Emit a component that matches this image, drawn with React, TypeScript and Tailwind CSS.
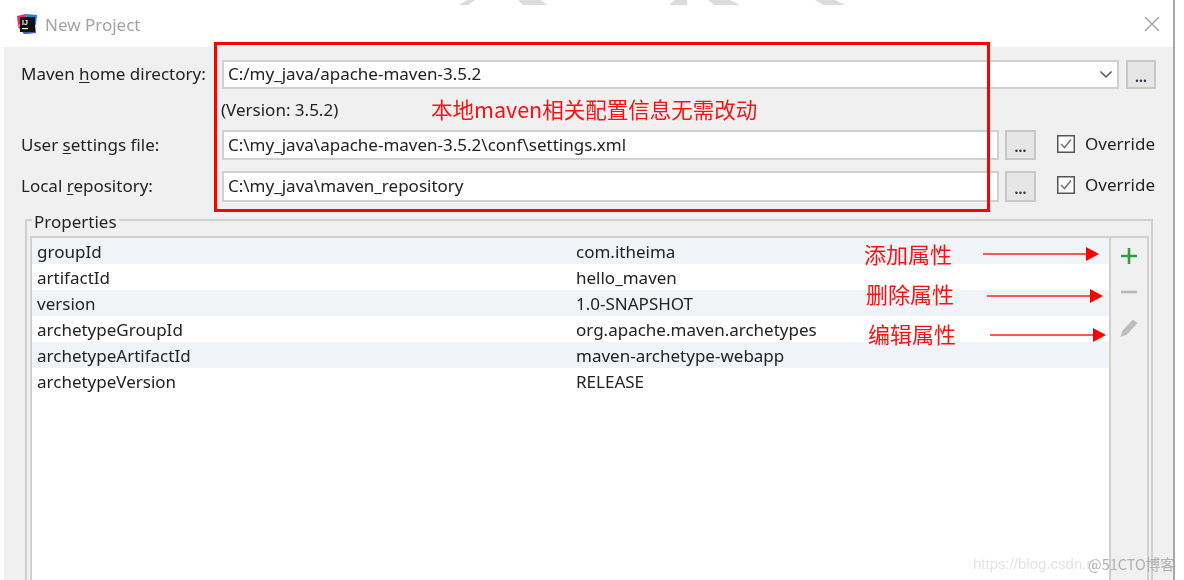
const FONT = "font-['Noto_Sans','Noto_Sans_CJK_SC',sans-serif]";
const CJK = "font-['Noto_Sans_CJK_SC',sans-serif]";

const properties = [
  ['groupId', 'com.itheima'],
  ['artifactId', 'hello_maven'],
  ['version', '1.0-SNAPSHOT'],
  ['archetypeGroupId', 'org.apache.maven.archetypes'],
  ['archetypeArtifactId', 'maven-archetype-webapp'],
  ['archetypeVersion', 'RELEASE'],
];

function Label({ before, mnemonic, after }: { before: string; mnemonic: string; after: string }) {
  return (
    <span className="w-[201px] shrink-0 pb-[1px] text-[17px] text-[#222]">
      {before}
      <span className="underline underline-offset-2">{mnemonic}</span>
      {after}
    </span>
  );
}

function Field({ value, className }: { value: string; className: string }) {
  return (
    <div className={`flex h-full items-center border-2 border-[#d0d0d0] bg-white pl-[4px] pb-[1px] text-[17px] text-[#222] ${className}`}>
      {value}
    </div>
  );
}

function Browse({ className }: { className: string }) {
  return (
    <div className={`flex h-full items-center justify-center border-2 border-[#c8c8c8] bg-[#e6e6e6] text-[14px] font-bold leading-none text-[#33334d] ${className}`}>
      <span className="mt-[4px]">...</span>
    </div>
  );
}

function Override() {
  return (
    <div className="ml-[21px] mt-[-3px] flex items-center gap-[10px] text-[17px] text-[#222]">
      <svg width="18" height="18" viewBox="0 0 18 18">
        <rect x="0.75" y="0.75" width="16.5" height="16.5" fill="#fff" stroke="#555" strokeWidth="1.5" />
        <path d="M4 9l3.5 3.5L14 4.5" fill="none" stroke="#777" strokeWidth="1.6" />
      </svg>
      Override
    </div>
  );
}

function Arrow({ className }: { className: string }) {
  return (
    <svg className={`absolute ${className}`} width="116" height="16" viewBox="0 0 116 16">
      <path d="M0 8H104" stroke="#ff2020" strokeWidth="1.5" />
      <path d="M103 1l13 7-13 7z" fill="#ff0000" />
    </svg>
  );
}

export default function App() {
  return (
    <div className={`relative h-[580px] w-[1184px] overflow-hidden bg-white blur-[0.5px] ${FONT}`}>
      {/* bits of the page behind the dialog */}
      <svg className="absolute left-0 top-0" width="1184" height="6" viewBox="0 0 1184 6">
        <g fill="#dcdcdc">
          <path d="M467 0h8l-7 5h-9z" />
          <path d="M518 0h22l8 5h-25z" />
          <path d="M675 0h12v5h-18z" />
          <path d="M708 0h22l10 5h-26z" />
          <path d="M815 0h20l10 5h-22z" />
        </g>
      </svg>

      <div className="ml-[4px] h-[580px] w-[1171px] border-r-2 border-[#a8a8a8]">
        {/* Title bar */}
        <div className="flex h-[47px] items-center justify-between pl-[12px] pr-[13px]">
          <div className="flex items-center gap-[7px]">
            <svg width="22" height="22" viewBox="0 0 22 22">
              <path d="M1 3l9-2 2 8-10 3z" fill="#f0246c" />
              <path d="M10 1l11 1-1 10-8-2z" fill="#1c7fe6" />
              <path d="M1 12l8 9 11-1-1-9z" fill="#f5743a" />
              <path d="M2 14l6 7 12-1-1-8z" fill="#3a62e0" />
              <rect x="4" y="4" width="15" height="15" fill="#111" />
              <text x="6" y="12" fontSize="7" fontWeight="700" fill="#fff" fontFamily="Liberation Sans, sans-serif">IJ</text>
              <rect x="6" y="15" width="6" height="1.2" fill="#fff" />
            </svg>
            <span className="mt-[2px] text-[17px] text-[#a3a3a3]">New Project</span>
          </div>
          <svg width="16" height="16" viewBox="0 0 16 16">
            <path d="M1 1l14 14M15 1L1 15" stroke="#a0a0a0" strokeWidth="1.4" />
          </svg>
        </div>

        {/* Dialog body */}
        <div className="h-[533px] bg-[#f0f0f0] pl-[17px] pt-[13px]">
          <div className="flex h-[29px] items-center">
            <Label before="Maven " mnemonic="h" after="ome directory:" />
            <div className="relative h-full">
              <Field value="C:/my_java/apache-maven-3.5.2" className="w-[897px]" />
              <svg className="absolute right-[6px] top-[10px]" width="14" height="9" viewBox="0 0 14 9">
                <path d="M1.5 1.5L7 7l5.5-5.5" fill="none" stroke="#555" strokeWidth="1.5" />
              </svg>
            </div>
            <Browse className="ml-[7px] w-[30px]" />
          </div>

          <div className="flex h-[41px] items-center pl-[200px] text-[17px] text-[#222]">(Version: 3.5.2)</div>

          <div className="flex h-[30px] items-center">
            <Label before="User " mnemonic="s" after="ettings file:" />
            <Field value="C:\my_java\apache-maven-3.5.2\conf\settings.xml" className="w-[777px]" />
            <Browse className="ml-[6px] w-[31px]" />
            <Override />
          </div>

          <div className="mt-[11px] flex h-[31px] items-center">
            <Label before="Local " mnemonic="r" after="epository:" />
            <Field value="C:\my_java\maven_repository" className="w-[777px]" />
            <Browse className="ml-[6px] w-[31px]" />
            <Override />
          </div>

          {/* Properties */}
          <fieldset className="ml-[4px] mt-[7px] h-[400px] w-[1128px] border-2 border-b-0 border-[#d0d0d0] pl-[3px] pr-[2px]">
            <legend className="ml-[2px] px-[2px] text-[17px] leading-[22px] text-[#222]">
              <span className="relative top-[2px]">Properties</span>
            </legend>
            <div className="mt-[5px] flex h-[360px] border-2 border-b-0 border-[#d0d0d0] bg-white">
              <div className="w-[1077px] shrink-0">
                {properties.map(([name, value], i) => (
                  <div key={name} className={`flex h-[26px] items-center pl-[5px] pt-[1px] text-[17px] text-[#222] ${i % 2 === 0 ? 'bg-[#f0f3f8]' : 'bg-white'}`}>
                    <span className="w-[539px] shrink-0">{name}</span>
                    <span>{value}</span>
                  </div>
                ))}
              </div>
              <div className="flex flex-1 flex-col items-center gap-[18px] border-l-2 border-[#d0d0d0] bg-[#f0f0f0] pt-[9px]">
                <svg width="18" height="18" viewBox="0 0 18 18">
                  <path d="M9 1v16M1 9h16" stroke="#2f9e44" strokeWidth="2.6" />
                </svg>
                <svg width="18" height="18" viewBox="0 0 18 18">
                  <path d="M1 9h16" stroke="#b8b8b8" strokeWidth="2.6" />
                </svg>
                <svg width="18" height="18" viewBox="0 0 18 18">
                  <path d="M13 0.5l4.5 3.5L7 15.5 0.5 18 2.5 11.5z" fill="#bdbdbd" />
                </svg>
              </div>
            </div>
          </fieldset>
        </div>
      </div>

      {/* Red annotations laid over the screenshot */}
      <div className="absolute left-[214px] top-[42px] h-[170px] w-[776px] border-[3px] border-[#ff0000]" />
      <span className={`absolute left-[431px] top-[93px] text-[21.5px] leading-[32px] text-[#ff1010] ${CJK}`}>本地maven相关配置信息无需改动</span>
      <span className={`absolute left-[864px] top-[237px] text-[22px] leading-[32px] text-[#ff1010] ${CJK}`}>添加属性</span>
      <span className={`absolute left-[866px] top-[277px] text-[22px] leading-[32px] text-[#ff1010] ${CJK}`}>删除属性</span>
      <span className={`absolute left-[868px] top-[317px] text-[22px] leading-[32px] text-[#ff1010] ${CJK}`}>编辑属性</span>
      <Arrow className="left-[983px] top-[246px]" />
      <Arrow className="left-[987px] top-[288px]" />
      <Arrow className="left-[990px] top-[327px]" />

      {/* Watermarks */}
      <span className="absolute left-[973px] top-[554px] font-['Liberation_Sans',sans-serif] text-[15px] leading-[20px] text-[#e4e4e4]">https://blog.csdn.n</span>
      <span className={`absolute left-[1088px] top-[553px] text-[14.5px] leading-[22px] text-[#a0a0a0]/80 ${CJK}`}>@51CTO博客</span>
    </div>
  );
}
